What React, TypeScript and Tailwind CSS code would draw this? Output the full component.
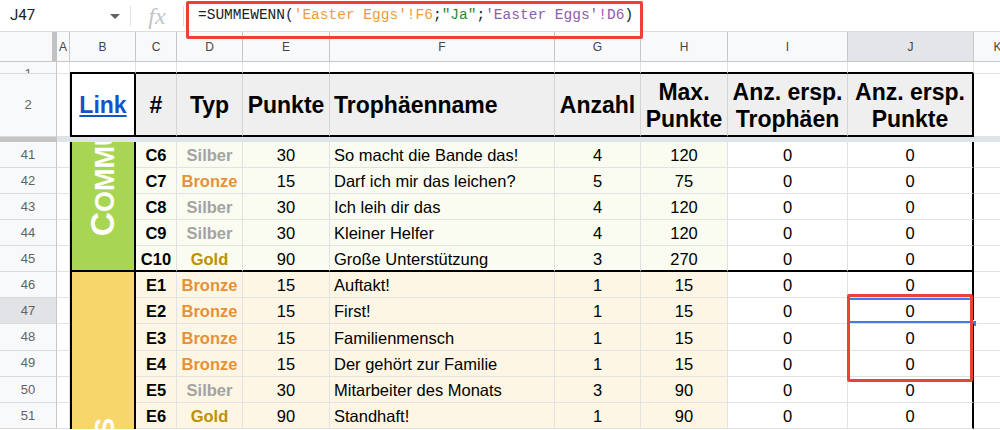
import React from "react";

type Typ = "Silber" | "Bronze" | "Gold";
interface Row {
  n: number;
  id: string;
  typ: Typ;
  p: number;
  name: string;
  a: number;
  m: number;
}

const green: Row[] = [
  { n: 41, id: "C6", typ: "Silber", p: 30, name: "So macht die Bande das!", a: 4, m: 120 },
  { n: 42, id: "C7", typ: "Bronze", p: 15, name: "Darf ich mir das leichen?", a: 5, m: 75 },
  { n: 43, id: "C8", typ: "Silber", p: 30, name: "Ich leih dir das", a: 4, m: 120 },
  { n: 44, id: "C9", typ: "Silber", p: 30, name: "Kleiner Helfer", a: 4, m: 120 },
  { n: 45, id: "C10", typ: "Gold", p: 90, name: "Große Unterstützung", a: 3, m: 270 },
];

const yellow: Row[] = [
  { n: 46, id: "E1", typ: "Bronze", p: 15, name: "Auftakt!", a: 1, m: 15 },
  { n: 47, id: "E2", typ: "Bronze", p: 15, name: "First!", a: 1, m: 15 },
  { n: 48, id: "E3", typ: "Bronze", p: 15, name: "Familienmensch", a: 1, m: 15 },
  { n: 49, id: "E4", typ: "Bronze", p: 15, name: "Der gehört zur Familie", a: 1, m: 15 },
  { n: 50, id: "E5", typ: "Silber", p: 30, name: "Mitarbeiter des Monats", a: 3, m: 90 },
  { n: 51, id: "E6", typ: "Gold", p: 90, name: "Standhaft!", a: 1, m: 90 },
];

const typColor: Record<Typ, string> = {
  Silber: "text-[#a3a3a3]",
  Bronze: "text-[#e69138]",
  Gold: "text-[#bf9000]",
};

const letters = ["A", "B", "C", "D", "E", "F", "G", "H", "I", "J", "K"];

function RowNum({ n, selected }: { n: number; selected?: boolean }) {
  return (
    <div
      className={
        selected
          ? "flex items-center justify-center bg-[#e1e3e6] border-r border-r-[#c7c7c7] border-b border-b-[#dadada] text-[13px] text-[#5f6368]"
          : "flex items-center justify-center bg-[#f8f9fa] border-r border-r-[#c7c7c7] border-b border-b-[#dadada] text-[13px] text-[#5f6368]"
      }
    >
      {n}
    </div>
  );
}

function DataCells({ r, section, last }: { r: Row; section: "green" | "yellow"; last: boolean }) {
  const bb = last ? "border-b-2 border-b-black" : "border-b border-b-[#e2e2e2]";
  const bg = section === "green" ? "bg-[#fafcf1]" : "bg-[#fdf6e5]";
  const base = `flex items-center pt-[2px] border-r border-r-[#e2e2e2] ${bb}`;
  const sel = r.n === 47;
  return (
    <>
      <div className={`${base} ${bg} justify-center font-bold`}>{r.id}</div>
      <div className={`${base} ${bg} justify-center font-bold ${typColor[r.typ]}`}>{r.typ}</div>
      <div className={`${base} ${bg} justify-center`}>{r.p}</div>
      <div className={`${base} ${bg} justify-start pl-[4px] whitespace-nowrap`}>{r.name}</div>
      <div className={`${base} ${bg} justify-center`}>{r.a}</div>
      <div className={`${base} ${bg} justify-center`}>{r.m}</div>
      <div className={`${base} bg-white justify-center`}>0</div>
      <div className={`flex items-center justify-center pt-[2px] bg-white border-r-2 border-r-black ${bb} relative`}>
        0
        {sel && (
          <>
            <div className="absolute inset-x-0 top-0 h-[2px] bg-[#3f7de6]" />
            <div className="absolute inset-x-0 bottom-0 h-[2px] bg-[#3f7de6]" />
            <div className="absolute right-[-5px] bottom-[-4px] w-[7px] h-[7px] bg-[#3f7de6] border border-white" />
          </>
        )}
      </div>
      <div className="border-b border-b-[#e2e2e2] bg-white" />
    </>
  );
}

function Section({
  rows,
  section,
}: {
  rows: Row[];
  section: "green" | "yellow";
}) {
  return (
    <>
      {rows.map((r, i) => (
        <React.Fragment key={r.n}>
          <RowNum n={r.n} selected={r.n === 47} />
          <div className="border-r border-r-[#e2e2e2] border-b border-b-[#e2e2e2] bg-white" />
          {i === 0 &&
            (section === "green" ? (
              <div className="row-span-5 relative overflow-hidden bg-[#a9d652] border-x-2 border-b-2 border-black">
                <div className="absolute inset-x-0 bottom-[34px] flex justify-center">
                  <span className="[writing-mode:vertical-rl] [text-orientation:sideways] rotate-180 text-white font-bold leading-none whitespace-nowrap">
                    <span className="text-[33.5px]">C</span>
                    <span className="text-[27px]">OMMUNITY</span>
                  </span>
                </div>
              </div>
            ) : (
              <div className="row-span-6 relative overflow-hidden bg-[#f7d66b] border-x-2 border-black">
                <div className="absolute inset-x-0 top-[146px] flex justify-center">
                  <span className="[writing-mode:vertical-rl] [text-orientation:sideways] rotate-180 text-white font-bold leading-none whitespace-nowrap">
                    <span className="text-[33.5px]">E</span>
                    <span className="text-[27px]">ASTER </span>
                    <span className="text-[33.5px]">E</span>
                    <span className="text-[27px]">GGS</span>
                  </span>
                </div>
              </div>
            ))}
          <DataCells r={r} section={section} last={section === "green" && i === rows.length - 1} />
        </React.Fragment>
      ))}
    </>
  );
}

export default function App() {
  const hdr = "flex items-center justify-center pt-[2px] bg-[#efefef] border-r border-r-[#d4d4d4] border-b-2 border-b-black";
  return (
    <div className="relative w-[1000px] h-[430px] overflow-hidden bg-white font-['Liberation_Sans',Arial,sans-serif] text-black">
      {/* formula bar */}
      <div className="flex items-center h-[32px] border-b border-b-[#dadce0] bg-white">
        <div className="w-[130px] h-full flex items-center justify-between pl-[10px] pr-[10px]">
          <span className="font-['Roboto',sans-serif] text-[15px] text-[#202124]">J47</span>
          <svg width="10" height="6" viewBox="0 0 10 6" className="mt-[2px]">
            <polygon points="0,0 10,0 5,5" fill="#5f6368" />
          </svg>
        </div>
        <div className="w-px h-[20px] bg-[#e0e0e0]" />
        <div className="w-[52px] flex items-center justify-center">
          <span className="font-['Liberation_Serif',serif] italic text-[24px] text-[#c4c4c4] leading-none">fx</span>
        </div>
        <div className="w-px h-[20px] bg-[#e0e0e0]" />
        <div className="pl-[14px] font-['Liberation_Mono',monospace] text-[14.5px] whitespace-nowrap">
          <span className="text-[#202124]">=SUMMEWENN(</span>
          <span className="text-[#f09a3e]">'Easter Eggs'!F6</span>
          <span className="text-[#202124]">;</span>
          <span className="text-[#1e8a3a]">"Ja"</span>
          <span className="text-[#202124]">;</span>
          <span className="text-[#8f5bb0]">'Easter Eggs'!D6</span>
          <span className="text-[#202124]">)</span>
        </div>
      </div>

      {/* sheet grid */}
      <div className="grid grid-cols-[57px_13px_66px_41px_66px_87px_225px_86px_87px_120px_126px_48px] grid-rows-[30px_12px_63px_5px_repeat(5,26px)_repeat(6,26.2px)] text-[16.5px]">
        {/* column headers */}
        <div className="flex justify-end bg-[#f8f9fa] border-b border-b-[#c7c7c7]">
          <div className="w-[5px] bg-[#c2c2c2]" />
        </div>
        {letters.map((l) => (
          <div
            key={l}
            className={
              l === "J"
                ? "flex items-center justify-center bg-[#e3e5e8] border-r border-b border-[#c7c7c7] text-[12px] text-[#444]"
                : "flex items-center justify-center bg-[#f8f9fa] border-r border-b border-[#c7c7c7] text-[12px] text-[#444]"
            }
          >
            {l}
          </div>
        ))}

        {/* row 1 */}
        <div className="flex justify-center items-start overflow-hidden bg-[#f8f9fa] border-r border-r-[#c7c7c7] border-b border-b-[#dadada] text-[13px] leading-none pt-[5px] text-[#5f6368]">
          1
        </div>
        <div className="border-r border-b border-[#e2e2e2]" />
        {[0, 1, 2, 3, 4, 5, 6, 7, 8].map((k) => (
          <div key={k} className="border-r border-r-[#e2e2e2] border-b-2 border-b-black" />
        ))}
        <div className="border-b border-[#e2e2e2]" />

        {/* row 2 header */}
        <RowNum n={2} />
        <div className="border-r border-b border-[#e2e2e2]" />
        <div className="flex items-center justify-center pt-[2px] bg-white border-x-2 border-b-2 border-black">
          <span className="text-[23px] font-bold text-[#1155cc] underline">Link</span>
        </div>
        <div className={`${hdr} text-[23px] font-bold`}>#</div>
        <div className={`${hdr} text-[23px] font-bold`}>Typ</div>
        <div className={`${hdr} text-[23px] font-bold`}>Punkte</div>
        <div className="flex items-center justify-start pl-[4px] pt-[2px] bg-[#efefef] border-r border-r-[#d4d4d4] border-b-2 border-b-black text-[23px] font-bold">
          Trophäenname
        </div>
        <div className={`${hdr} text-[23px] font-bold`}>Anzahl</div>
        <div className={`${hdr} text-[23px] font-bold leading-[27px] text-center`}>
          Max.
          <br />
          Punkte
        </div>
        <div className={`${hdr} text-[23px] font-bold leading-[27px] text-center whitespace-nowrap`}>
          Anz. ersp.
          <br />
          Trophäen
        </div>
        <div className="flex items-center justify-center pt-[2px] bg-[#efefef] border-r-2 border-r-black border-b-2 border-b-black text-[23px] font-bold leading-[27px] text-center whitespace-nowrap">
          Anz. ersp.
          <br />
          Punkte
        </div>
        <div className="border-b border-[#e2e2e2]" />

        {/* freeze line */}
        <div className="col-span-full flex">
          <div className="w-[57px] bg-[#c4c4c4]" />
          <div className="flex-1 bg-[#dfe3ea]" />
        </div>

        <Section rows={green} section="green" />
        <Section rows={yellow} section="yellow" />
      </div>

      {/* annotation boxes */}
      <div className="absolute left-[186px] top-[1px] w-[457px] h-[38px] border-[3px] border-[#ea4335] rounded-[2px]" />
      <div className="absolute left-[847px] top-[294px] w-[126px] h-[88px] border-[3px] border-[#ea4335] rounded-[2px]" />
    </div>
  );
}
